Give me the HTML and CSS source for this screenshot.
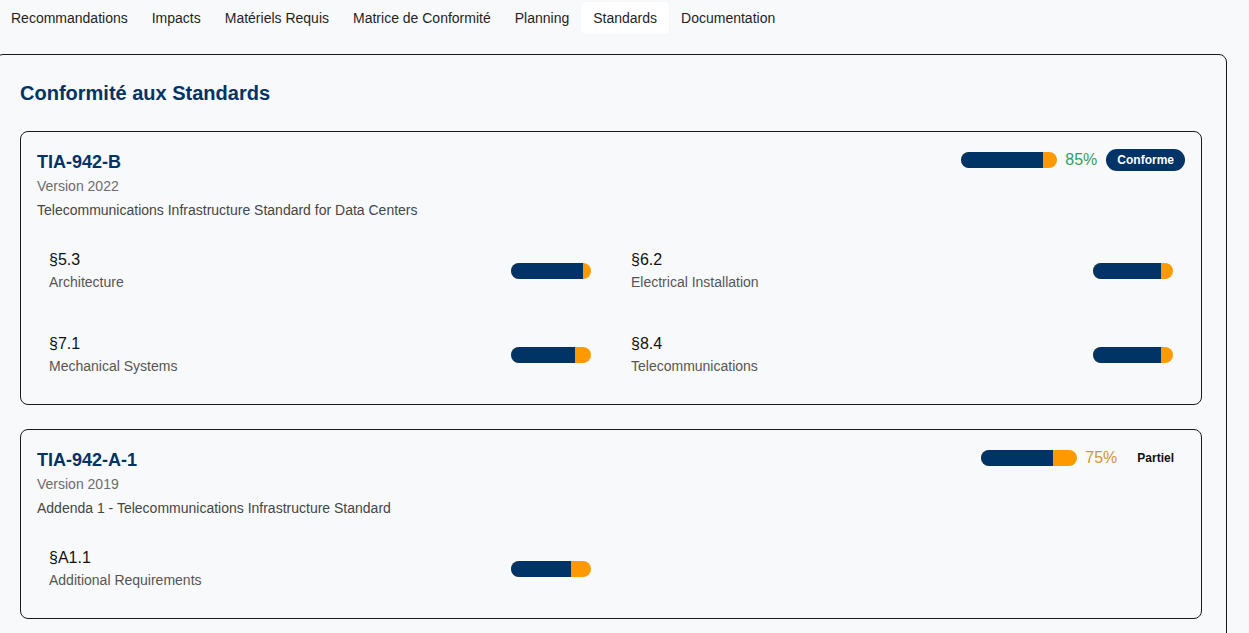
FILE: index.html
```html
<!DOCTYPE html>
<html lang="fr">
<head>
<meta charset="utf-8">
<title>Conformité aux Standards</title>
<link rel="stylesheet" href="styles.css">
</head>
<body>
<nav class="tabs">
  <span class="tab">Recommandations</span>
  <span class="tab">Impacts</span>
  <span class="tab">Matériels Requis</span>
  <span class="tab">Matrice de Conformité</span>
  <span class="tab">Planning</span>
  <span class="tab active">Standards</span>
  <span class="tab">Documentation</span>
</nav>
<section class="panel">
  <h2 class="panel-title">Conformité aux Standards</h2>

  <div class="card">
    <div class="std-head">
      <div class="std-info">
        <h3 class="std-name">TIA-942-B</h3>
        <div class="std-ver">Version 2022</div>
        <div class="std-desc">Telecommunications Infrastructure Standard for Data Centers</div>
      </div>
      <div class="std-status">
        <div class="bar big"><div class="fill" style="width:85%"></div></div>
        <span class="pct ok">85%</span>
        <span class="badge conforme">Conforme</span>
      </div>
    </div>
    <div class="sections">
      <div class="sec">
        <div class="sec-text"><div class="sec-ref">§5.3</div><div class="sec-name">Architecture</div></div>
        <div class="bar"><div class="fill" style="width:90%"></div></div>
      </div>
      <div class="sec">
        <div class="sec-text"><div class="sec-ref">§6.2</div><div class="sec-name">Electrical Installation</div></div>
        <div class="bar"><div class="fill" style="width:85%"></div></div>
      </div>
      <div class="sec">
        <div class="sec-text"><div class="sec-ref">§7.1</div><div class="sec-name">Mechanical Systems</div></div>
        <div class="bar"><div class="fill" style="width:80%"></div></div>
      </div>
      <div class="sec">
        <div class="sec-text"><div class="sec-ref">§8.4</div><div class="sec-name">Telecommunications</div></div>
        <div class="bar"><div class="fill" style="width:85%"></div></div>
      </div>
    </div>
  </div>

  <div class="card">
    <div class="std-head">
      <div class="std-info">
        <h3 class="std-name">TIA-942-A-1</h3>
        <div class="std-ver">Version 2019</div>
        <div class="std-desc">Addenda 1 - Telecommunications Infrastructure Standard</div>
      </div>
      <div class="std-status">
        <div class="bar big"><div class="fill" style="width:75%"></div></div>
        <span class="pct partial">75%</span>
        <span class="badge partiel">Partiel</span>
      </div>
    </div>
    <div class="sections">
      <div class="sec">
        <div class="sec-text"><div class="sec-ref">§A1.1</div><div class="sec-name">Additional Requirements</div></div>
        <div class="bar"><div class="fill" style="width:75%"></div></div>
      </div>
    </div>
  </div>
</section>
</body>
</html>
```

FILE: styles.css
```css
* { box-sizing: border-box; }

html, body {
  margin: 0;
  padding: 0;
  background: #f8f9fb;
  font-family: "Liberation Sans", Arial, sans-serif;
  color: #222;
  overflow: hidden;
}

.tabs {
  display: flex;
  padding-top: 2px;
  margin-left: -1px;
  margin-bottom: 20px;
}

.tab {
  padding: 8px 12px;
  font-size: 14px;
  line-height: 16px;
  color: #1f1f1f;
  border-radius: 4px;
}

.tab.active {
  background: #ffffff;
  box-shadow: 0 0 2px rgba(0, 0, 0, 0.04);
}

.panel {
  margin: 0 22px 0 -5px;
  padding: 23px 24px 24px;
  border: 1px solid #1a1a1a;
  border-radius: 8px;
  background: #f8f9fb;
}

.panel-title {
  margin: 0 0 23px;
  font-size: 20px;
  line-height: 30px;
  font-weight: bold;
  color: #003366;
}

.card {
  border: 1px solid #1a1a1a;
  border-radius: 8px;
  padding: 16px 16px 15px;
  margin-bottom: 24px;
  background: #f8f9fb;
}

.std-head {
  display: flex;
  justify-content: space-between;
  align-items: flex-start;
}

.std-name {
  margin: 0;
  font-size: 18px;
  line-height: 28px;
  font-weight: bold;
  color: #003366;
}

.std-ver {
  font-size: 14px;
  line-height: 21px;
  color: #6c6c6c;
  margin-bottom: 3px;
}

.std-desc {
  font-size: 14px;
  line-height: 21px;
  color: #454545;
}

.std-status {
  display: flex;
  align-items: center;
  gap: 8px;
  margin-top: 1px;
}

.bar {
  width: 80px;
  height: 16px;
  border-radius: 8px;
  background: #ff9900;
  overflow: hidden;
  flex-shrink: 0;
}

.bar.big {
  width: 96px;
}

.fill {
  height: 100%;
  background: #003366;
}

.pct {
  font-size: 16px;
  line-height: 20px;
}

.pct.ok { color: #30a062; }
.pct.partial { color: #d0962f; }

.badge {
  margin-left: 1px;
  padding: 4px 11px;
  border-radius: 12px;
  font-size: 12px;
  line-height: 14px;
  font-weight: bold;
}

.badge.conforme {
  background: #003366;
  color: #ffffff;
}

.badge.partiel {
  background: transparent;
  color: #111;
}

.sections {
  display: grid;
  grid-template-columns: 1fr 1fr;
  column-gap: 16px;
  row-gap: 15px;
  margin-top: 15px;
}

.sec {
  display: flex;
  justify-content: space-between;
  align-items: center;
  padding: 12px;
}

.sec-ref {
  font-size: 16px;
  line-height: 24px;
  color: #111;
}

.sec-name {
  font-size: 14px;
  line-height: 21px;
  color: #555;
}
```
